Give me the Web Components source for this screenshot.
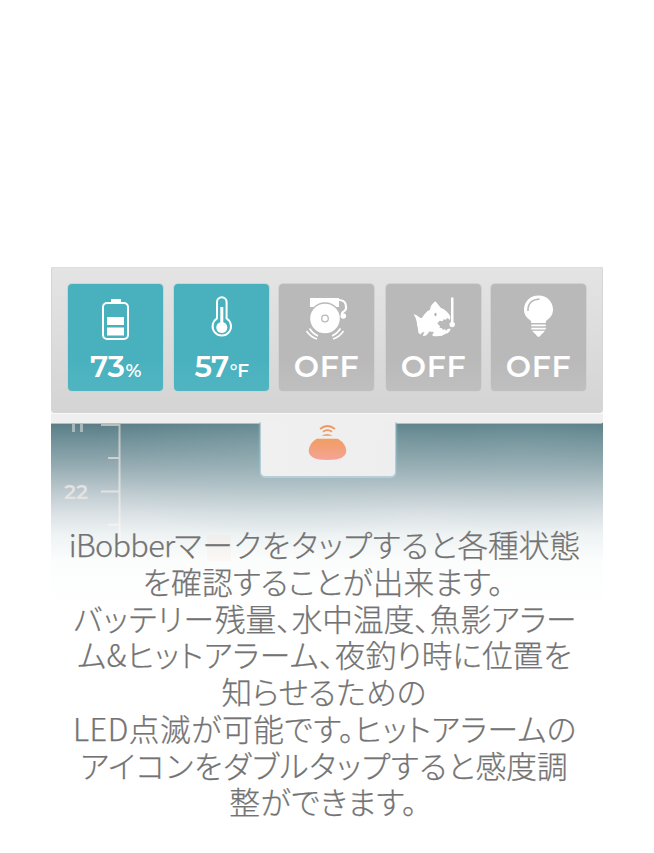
<!DOCTYPE html>
<html lang="ja"><head><meta charset="utf-8"><title>iBobber</title>
<style>body{margin:0;background:#fff;width:654px;height:853px;overflow:hidden}</style></head>
<body><bobber-page></bobber-page>
<script>
const define=(name,html)=>customElements.define(name,class extends HTMLElement{
  constructor(){super();this.attachShadow({mode:'open'}).innerHTML=html;}
});
define('status-tile',`<style>
:host{display:flex;flex-direction:column;align-items:center;box-sizing:border-box;width:95px;height:107px;border-radius:4px;background:linear-gradient(#b9b9b9 70%,#bfbfbf);color:#fff;box-shadow:0 0 0 1px #d5d1cf;font:600 30px/35px Montserrat,Inter,"Liberation Sans",sans-serif}
:host([active]){background:linear-gradient(#49b1be 70%,#50b5c1);box-shadow:0 0 0 1px #d9cfcb}
.icon{height:65px;width:95px}.value{height:35px;white-space:nowrap;letter-spacing:.6px}
</style><div class="icon"><slot name="icon"></slot></div><div class="value"><slot></slot></div>`);
define('status-panel',`<style>
:host{display:block;box-sizing:border-box;height:146px;padding:16.500px 16px 0 17px;background:linear-gradient(#e4e4e4,#d4d4d4);box-shadow:inset 1px 0 #d6d6d6,inset -1px 0 #d6d6d6,inset 0 1px #dedede;border-radius:2px 2px 4px 4px}
.row{display:grid;grid-template-columns:106px 105px 107px 105px 95px}
svg{display:block;width:95px;height:65px;fill:#fff;stroke:none}
.l{fill:none;stroke:#fff}.u{font-size:18.500px;letter-spacing:-.4px;margin-left:1px}
.n{letter-spacing:-.5px}
</style><div class="row">
<status-tile active><svg slot="icon" viewBox="0 0 95 65"><rect class="l" x="35" y="19" width="25" height="36" rx="4" stroke-width="2"/><path d="M43 15h10v4H43zM39 33h17v8H39zM39 43.500h17v8H39z"/></svg><span class="n">73</span><span class="u">%</span></status-tile>
<status-tile active><svg slot="icon" viewBox="0 0 95 65"><path class="l" stroke-width="2" d="M43 34.500V18a4.800 4.800 0 0 1 9.600 0v16.500a9.200 9.200 0 1 1-9.600 0z"/><circle cx="47.800" cy="43.500" r="5.500"/><path d="M46.300 23h3v18h-3z"/></svg><span class="n">57</span><span class="u">°F</span></status-tile>
<status-tile><svg slot="icon" viewBox="0 0 95 65"><path d="M31 14h29v9H31z"/><path class="l" stroke-width="2.200" d="M58 16h2.500q6.500.5 6.500 6.500v2q-.5 2.500-3 3.500-1.500 1-1 3"/><circle cx="46" cy="34.500" r="16.200" fill="#b9b9b9"/><circle cx="46" cy="34.500" r="14.800"/><circle cx="46" cy="34.500" r="3.300" fill="none" stroke="#b9b9b9" stroke-width="1.300"/><circle cx="64.300" cy="32" r="2.800"/><path class="l" stroke-width="1.500" d="M30.500 44.500q3 5 8.500 7.500M27.500 47q4 6 10.500 8M61.500 44.500q-3 5-8.500 7.500M64.500 47q-4 6-10.500 8"/></svg>OFF</status-tile>
<status-tile><svg slot="icon" viewBox="0 0 95 65"><path d="M27.500 30q3.500.8 5.500 3 1.500 1.500 3 .7l2.700-3.700q2.500-3.500 5.300-4.300.5-5 4.800-8 1.200-.5 1.700.7 2 2.600 4.500 5.600 6 2 9.300 8.500l-.3 4-1-1.500-2-1-1 1.700-2.500-.4-.8 2-3-.5-2.400 2.500 2.700 3-.5 1.700 2.500.1.500 1.700 2.500-.5 1 1.500 2-2h2.500q-.5 4.200-5 5-4 3.500-12.500 2.200-1.500-1 1-4l-5-.4q-1.700 4.500-6 4.700 0-2.300 1.500-4.300l-2.500.5-1.500 2-2-1.500q-.5-5-1.500-8.500 0-5-3.500-10.500z"/><ellipse cx="49.500" cy="30.500" rx="1.100" ry="1.700" fill="#b0b0b0"/><path d="M65 13.500h2.500V38H65z"/><circle cx="66.200" cy="40.500" r="2.700"/></svg>OFF</status-tile>
<status-tile><svg slot="icon" viewBox="0 0 95 65"><path d="M47.500 11.500c8.300 0 14.500 6.200 14.500 14 0 5.500-3 8.500-6 10.500q-1.300 1-1.300 3H40.300q0-2-1.300-3c-3-2-6-5-6-10.500 0-7.800 6.200-14 14.500-14zM40.300 40.500h14.500v1.700H40.300zM40.300 43.700h14.500v1.800H40.300zM41.300 46.700h12.600q-1.400 2-3.400 3.500-1.400 2.800-2.900 2.800t-2.900-2.800q-2-1.500-3.400-3.500z"/><path d="M37 27q-.5-11 11.500-12" fill="none" stroke="#b9b9b9" stroke-width="1.600"/></svg>OFF</status-tile></div>`);
define('sonar-view',`<style>
:host{display:block;height:181px;margin-top:-1px;background:radial-gradient(ellipse 190px 90px at 42% 16%,#a0bebf42,#fff0),radial-gradient(ellipse 150px 85px at 85% 15%,#a0bebf30,#fff0),linear-gradient(#597c85,#6d8e96 8%,#93aab1 23%,#bdcacf 38%,#dae1e4 50%,#eff3f4 62%,#fbfcfc 75%,#fff)}
svg{display:block}text{font:600 21px Montserrat,Inter,sans-serif;fill:#e3e3e3}
</style><svg width="552" height="181" viewBox="0 0 552 181"><defs><linearGradient id="axis" gradientUnits="userSpaceOnUse" x1="0" y1="0" x2="0" y2="130"><stop stop-color="#e0d6d4" stop-opacity=".7"/><stop offset=".7" stop-color="#f4eeec" stop-opacity=".8"/><stop offset="1" stop-color="#fff"/></linearGradient></defs><g fill="url(#axis)"><path d="M67.500 0h2v130h-2zM50 1h18v2H50zM57 34h11v2H57zM50 67.500h18v2H50zM57 100.700h11v2H57z"/></g><path d="M22.500 0v9M30.500 0v9" stroke="#ccd4d6" stroke-opacity=".65" stroke-width="3"/><text x="13" y="76" textLength="24" lengthAdjust="spacingAndGlyphs">22</text><rect x="156" y="112" width="24" height="26" fill="#ff9c77" opacity=".05"/></svg>`);
define('bobber-tab',`<style>
:host{display:block;position:absolute;z-index:2;left:210px;top:155px;width:134px;height:54px;background:linear-gradient(100deg,#f0f0f0,#eee);border-radius:0 0 4px 4px;box-shadow:0 1px 1px 1px #b9cfd6,0 0 3px 1px #8fc4d4;clip-path:inset(0 -5px -6px -5px)}svg{display:block}
</style><svg width="134" height="54" viewBox="0 0 134 54"><defs><linearGradient id="g" x2="0" y2="1"><stop stop-color="#f19d62"/><stop offset="1" stop-color="#f5a497"/></linearGradient></defs><path fill="url(#g)" d="M55.500 16.800h21.500q8.300 5.500 8.300 11.700 0 9.500-18.800 9.500T47.700 28.500q0-6.200 7.800-11.700z"/><path fill="none" stroke="#ed9860" stroke-width="1.700" d="M59 7q7.500-6 15 0M62 9.800q4.500-3.200 9 0"/><path d="M60.500 13.800q5.500-3.800 11 0z" fill="#ed9860"/></svg>`);
define('caption-text',`<style>
:host{display:flex;flex-direction:column;align-items:center;width:654px;color:#737373;font:300 30.700px/36.750px "Noto Sans CJK JP Light","Noto Sans CJK JP",sans-serif;-webkit-text-stroke:.25px #737373;font-feature-settings:"palt" 1;position:absolute;left:0;top:526px;white-space:nowrap}
</style><slot></slot>`);
define('caption-line',`<style>:host{display:block;height:36.75px;transform:translateX(var(--shift,0px));letter-spacing:var(--track,0px)}</style><slot></slot>`);
define('bobber-page',`<style>
:host{display:block;width:654px;height:853px;position:relative;background:#fff}
.device{width:552px;margin-left:51px;padding-top:267px}.screen{position:relative}
.edge{height:11px;background:#efefef;border-bottom:1px solid #b5bebe;border-top:1px solid #f9f9f9;box-sizing:border-box;border-radius:0 0 3px 0;position:relative;z-index:1}
</style><div class="device"><div class="screen"><status-panel></status-panel><div class="edge"></div><sonar-view></sonar-view><bobber-tab></bobber-tab></div></div>
<caption-text><caption-line style="--shift:-2.5px"><span style="letter-spacing:-.7px">iBobber</span><span style="letter-spacing:.8px">マークをタップすると</span>各種状態</caption-line><caption-line style="--track:.2px;--shift:-4px">を確認することが出来ます。</caption-line><caption-line style="--shift:-2px"><span style="letter-spacing:1px">バッテリー</span>残量、水中温度、魚影アラー</caption-line><caption-line style="--shift:-2.5px"><span style="letter-spacing:.5px">ム&amp;ヒットアラーム、</span>夜釣り時に位置を</caption-line><caption-line style="--track:.3px;--shift:-3px">知らせるための</caption-line><caption-line style="--track:.55px;--shift:-2px">LED点滅が可能です。ヒットアラームの</caption-line><caption-line style="--shift:-3px"><span style="letter-spacing:.8px">アイコンをダブルタップすると</span>感度調</caption-line><caption-line style="--track:.6px;--shift:-3.5px">整ができます。</caption-line></caption-text>`);
</script></body></html>
